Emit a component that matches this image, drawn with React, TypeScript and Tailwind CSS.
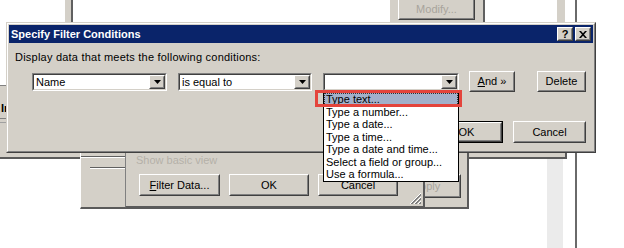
import React from "react";

function Raised({ className = "", innerClassName = "", children }: { className?: string; innerClassName?: string; children?: React.ReactNode }) {
  return (
    <div className={"border border-t-white border-l-white border-r-[#404040] border-b-[#404040] " + className}>
      <div className={"h-full w-full border border-t-[#d4d0c8] border-l-[#d4d0c8] border-r-[#808080] border-b-[#808080] bg-[#d4d0c8] flex items-center justify-center " + innerClassName}>
        {children}
      </div>
    </div>
  );
}

function Arrow() {
  return (
    <svg width="7" height="4" viewBox="0 0 7 4">
      <polygon points="0,0 7,0 3.5,4" fill="#000" />
    </svg>
  );
}

function Combo({ w, text }: { w: string; text: string }) {
  return (
    <div className={w + " h-[18px] border border-t-[#808080] border-l-[#808080] border-r-white border-b-white"}>
      <div className="h-full border border-t-[#404040] border-l-[#404040] border-r-[#d4d0c8] border-b-[#d4d0c8] bg-white flex">
        <div className="flex-1 pl-[2px] text-[11px] leading-[14px] text-black">{text}</div>
        <Raised className="w-[16px] h-full">
          <Arrow />
        </Raised>
      </div>
    </div>
  );
}

function Btn({ w, h = "h-[22px]", children, disabled = false }: { w: string; h?: string; children: React.ReactNode; disabled?: boolean }) {
  return (
    <Raised className={w + " " + h}>
      <span className={"text-[11px] leading-[13px] " + (disabled ? "text-[#a8a49c]" : "text-black")}>{children}</span>
    </Raised>
  );
}

export default function App() {
  const items = [
    "Type text...",
    "Type a number...",
    "Type a date...",
    "Type a time...",
    "Type a date and time...",
    "Select a field or group...",
    "Use a formula...",
  ];
  return (
    <div className="relative w-[624px] h-[248px] overflow-hidden bg-white font-['Liberation_Sans',Arial,sans-serif] text-black select-none">
      {/* background: top-left strip */}
      <div className="absolute left-[65px] top-0 w-[8px] h-[30px] bg-[#d4d0c8] border-r-2 border-r-[#606060]" />
      {/* background: top panel with Modify button */}
      <div className="absolute left-[390px] top-0 w-[95px] h-[30px] bg-[#d4d0c8] border-r-2 border-r-[#606060] flex justify-center">
        <Raised className="w-[77px] h-[24px] -mt-[4px]">
          <span className="text-[11px] leading-[13px] text-[#a8a49c] mt-[3px]">Modify...</span>
        </Raised>
      </div>
      {/* background: right strips */}
      <div className="absolute left-[557px] top-0 w-[8px] h-[30px] bg-[#d4d0c8]" />
      <div className="absolute left-[547px] top-[150px] w-[16px] h-[100px] bg-[#ebebeb]" />
      <div className="absolute left-[575px] top-0 w-[2px] h-[248px] bg-[#6a6a6a]" />

      {/* background window B */}
      <div className="absolute -left-[2px] top-[85px] w-[569px] h-[74px] bg-[#d4d0c8] border-t border-t-[#808080] border-b-2 border-b-[#5a5a5a] border-r-2 border-r-[#5a5a5a]">
        <div className="ml-[3px] mt-[16px] text-[11px] leading-[13px] font-bold">Ir</div>
        <div className="mt-[3px] w-[12px] h-[1px] bg-[#808080]" />
        <div className="mt-[3px] w-[12px] h-[1px] bg-[#a0a0a0]" />
      </div>

      {/* background window D (with Apply) */}
      <div className="absolute left-[80px] top-[140px] w-[389px] h-[69px] bg-[#d4d0c8] border-l border-l-white border-b-2 border-b-[#5a5a5a] border-r-2 border-r-[#5a5a5a] flex">
        <div className="w-[45px] h-full flex flex-col pt-[16px]">
          <div className="w-full h-[2px] border-t border-t-[#606060] border-b border-b-white" />
          <div className="ml-[9px] mt-[9px] w-[36px] h-[2px] border-t border-t-[#606060] border-b border-b-white" />
        </div>
        <div className="flex-1 flex justify-end items-start pt-[34px] pr-[6px]">
          <Raised className="w-[69px] h-[24px]">
            <span className="text-[11px] leading-[13px] text-[#a8a49c]">Apply</span>
          </Raised>
        </div>
      </div>

      {/* background window C' */}
      <div className="absolute left-[125px] top-[140px] w-[300px] h-[68px] bg-[#d4d0c8] border-l border-l-[#808080] border-r-2 border-r-[#5a5a5a] border-b-2 border-b-[#5a5a5a] flex flex-col pl-[10px]">
        <div className="mt-[14px] text-[11px] leading-[13px] text-[#b4b0a8]">Show basic view</div>
        <div className="mt-[7px] flex gap-[9px] pl-[3px]">
          <Btn w="w-[81px]">
            <span className="underline">F</span>ilter Data...
          </Btn>
          <Btn w="w-[80px]">OK</Btn>
          <Btn w="w-[80px]">Cancel</Btn>
        </div>
        <div className="absolute right-[1px] bottom-[1px]">
          <svg width="13" height="13" viewBox="0 0 13 13">
            <line x1="12" y1="1" x2="1" y2="12" stroke="#fff" />
            <line x1="12" y1="2" x2="2" y2="12" stroke="#808080" />
            <line x1="12" y1="3" x2="3" y2="12" stroke="#808080" />
            <line x1="12" y1="5" x2="5" y2="12" stroke="#fff" />
            <line x1="12" y1="6" x2="6" y2="12" stroke="#808080" />
            <line x1="12" y1="7" x2="7" y2="12" stroke="#808080" />
            <line x1="12" y1="9" x2="9" y2="12" stroke="#fff" />
            <line x1="12" y1="10" x2="10" y2="12" stroke="#808080" />
            <line x1="12" y1="11" x2="11" y2="12" stroke="#808080" />
          </svg>
        </div>
      </div>

      {/* main dialog */}
      <div className="absolute left-[6px] top-[22px] w-[590px] h-[131px] border border-t-[#d4d0c8] border-l-[#d4d0c8] border-r-[#404040] border-b-[#404040]">
        <div className="h-full w-full border border-t-white border-l-white border-r-[#808080] border-b-[#808080] bg-[#d4d0c8] p-[1px] flex flex-col">
          <div className="h-[18px] bg-[#0a246a] flex items-center justify-between pl-[2px] pr-[2px]">
            <span className="text-[11px] leading-[13px] font-bold text-white">Specify Filter Conditions</span>
            <div className="flex gap-[2px]">
              <Raised className="w-[16px] h-[14px]">
                <span className="text-[11px] leading-[10px] font-bold">?</span>
              </Raised>
              <Raised className="w-[16px] h-[14px]">
                <svg width="8" height="7" viewBox="0 0 8 7">
                  <path d="M0 0h2l2 2.2L6 0h2L5 3.5 8 7H6L4 4.8 2 7H0l3-3.5z" fill="#000" />
                </svg>
              </Raised>
            </div>
          </div>
          <div className="pl-[6px] mt-[8px] text-[11px] leading-[13px] tracking-[0.22px]">Display data that meets the following conditions:</div>
          <div className="mt-[7px] pl-[23px] h-[21px] flex items-center">
            <Combo w="w-[135px]" text="Name" />
            <div className="w-[11px]" />
            <Combo w="w-[134px]" text="is equal to" />
            <div className="w-[11px]" />
            <Combo w="w-[136px]" text="" />
            <div className="w-[10px]" />
            <Btn w="w-[46px]" h="h-[21px]">
              <span className="underline">A</span>nd »
            </Btn>
            <div className="w-[22px]" />
            <Btn w="w-[49px]" h="h-[21px]">Delete</Btn>
          </div>
          <div className="mt-[29px] pr-[7px] flex justify-end gap-[10px]">
            <div className="border border-black">
              <Btn w="w-[71px]" h="h-[20px]">OK</Btn>
            </div>
            <Btn w="w-[73px]">Cancel</Btn>
          </div>
        </div>
      </div>

      {/* dropdown list */}
      <div className="absolute left-[323px] top-[92px] w-[136px] h-[90px] bg-white border border-black flex flex-col">
        {items.map((t, i) => (
          <div
            key={t}
            className={
              "h-[12.57px] pl-[2px] text-[11px] leading-[12px] whitespace-nowrap " +
              (i === 0 ? "bg-[#a2b0ca] outline-1 outline-dotted outline-[#303030] -outline-offset-1" : "")
            }
          >
            {t}
          </div>
        ))}
      </div>

      {/* red annotation */}
      <div className="absolute left-[315px] top-[90px] w-[147px] h-[17px] border-[3px] border-[#e4443c]" />
    </div>
  );
}
